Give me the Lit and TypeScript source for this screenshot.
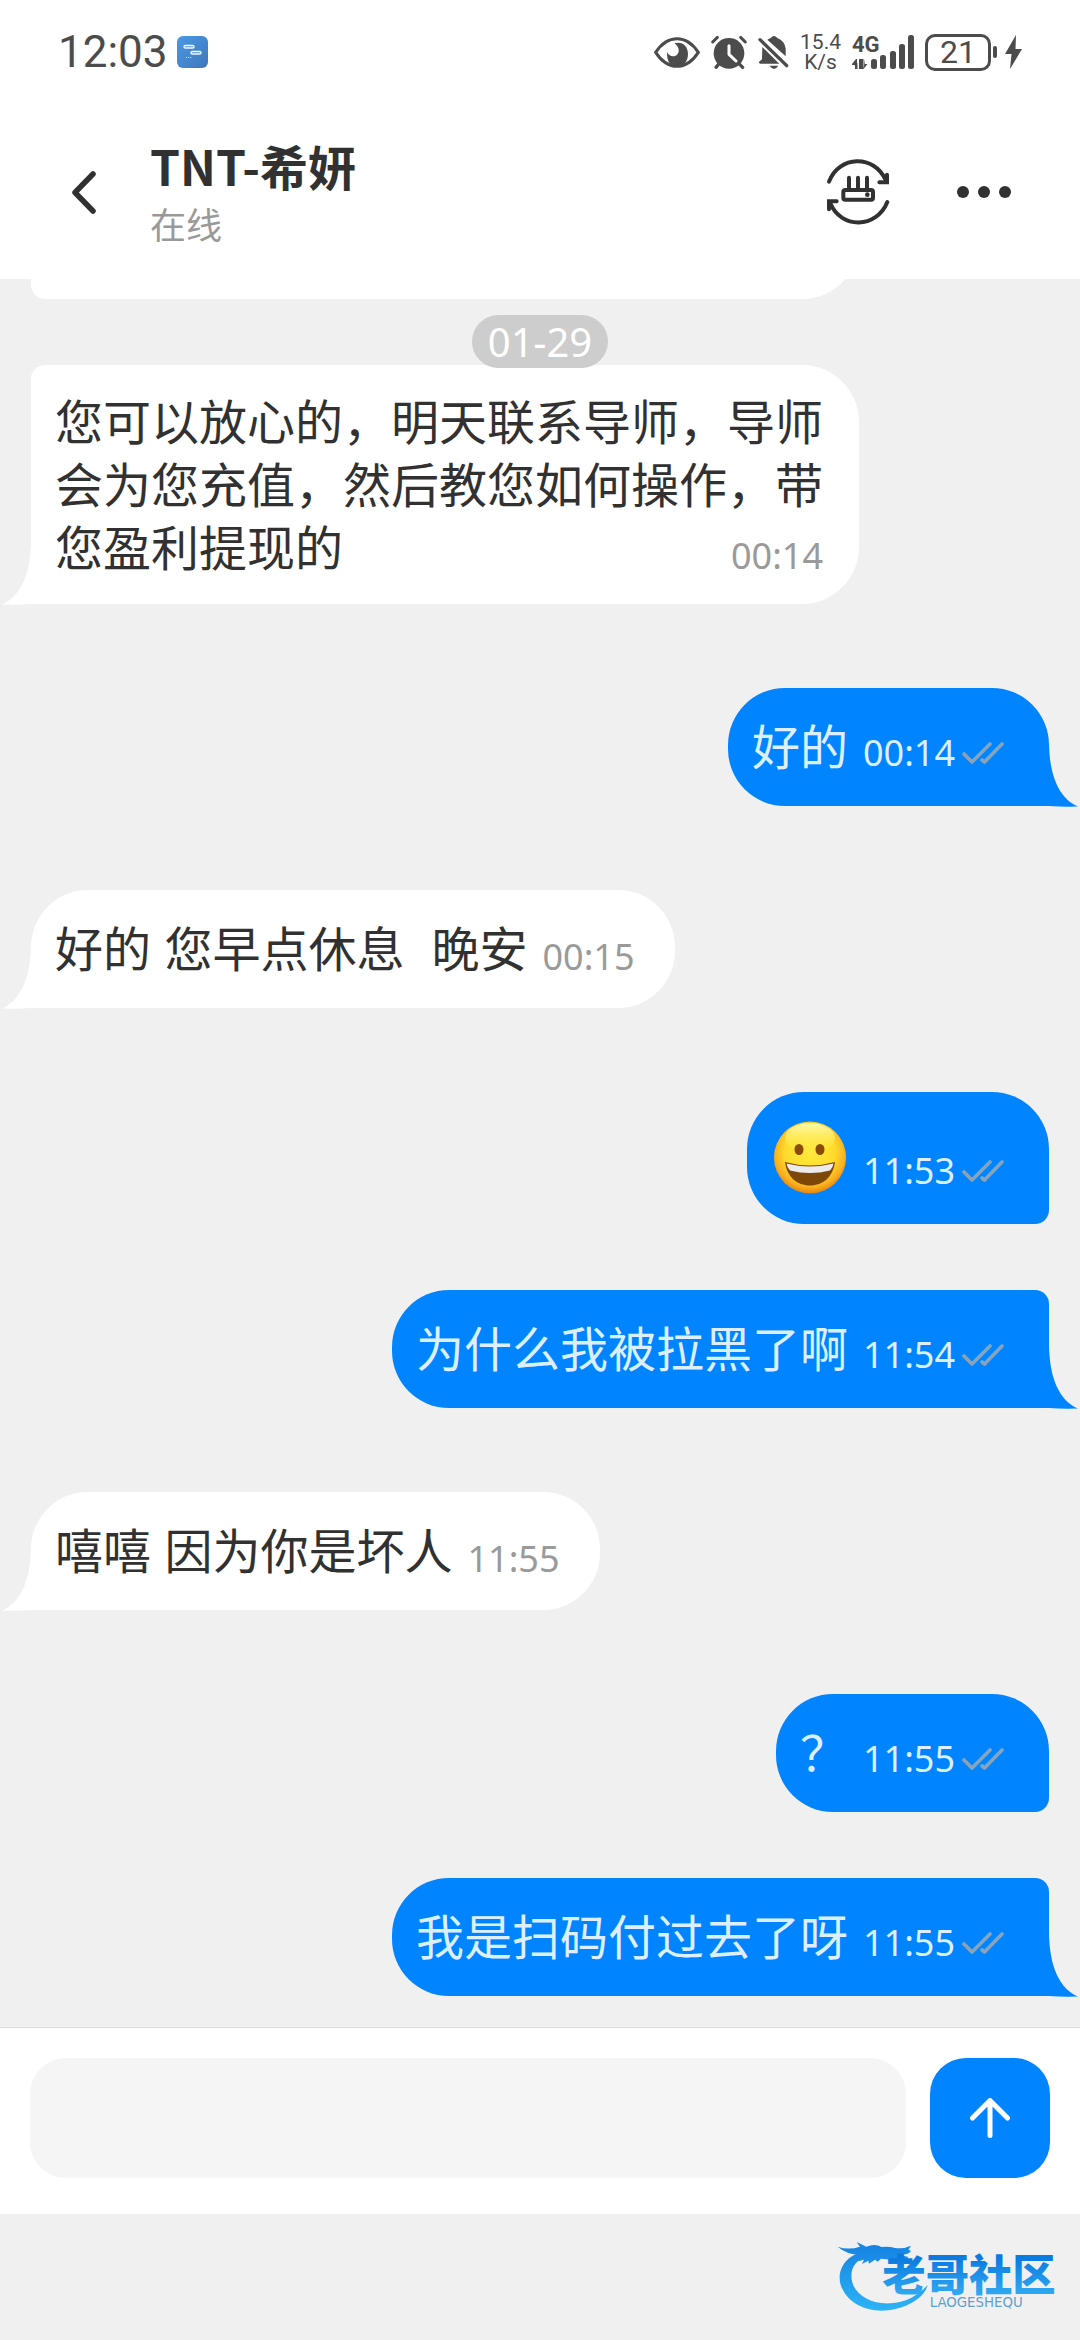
import { LitElement, html, svg, css, nothing } from "lit";
import { customElement, property } from "lit/decorators.js";
import { classMap } from "lit/directives/class-map.js";

interface Message {
  own: boolean;
  text?: string;
  emoji?: boolean;
  time: string;
  /** First message of a run by the same sender. */
  first: boolean;
  /** Last message of a run by the same sender; carries the tail. */
  last: boolean;
  long?: boolean;
}

const MESSAGES: Message[] = [
  { own: false, text: "您可以放心的，明天联系导师，导师会为您充值，然后教您如何操作，带您盈利提现的", time: "00:14", first: false, last: true, long: true },
  { own: true, text: "好的", time: "00:14", first: true, last: true },
  { own: false, text: "好的 您早点休息  晚安", time: "00:15", first: true, last: true },
  { own: true, emoji: true, time: "11:53", first: true, last: false },
  { own: true, text: "为什么我被拉黑了啊", time: "11:54", first: false, last: true },
  { own: false, text: "嘻嘻 因为你是坏人", time: "11:55", first: true, last: true },
  { own: true, text: "？", time: "11:55", first: true, last: false },
  { own: true, text: "我是扫码付过去了呀", time: "11:55", first: false, last: true },
];

const SIGNAL_BARS = [
  { x: 19, height: 10 },
  { x: 28, height: 14 },
  { x: 38, height: 18 },
  { x: 47, height: 25 },
  { x: 56, height: 34 },
];

@customElement("status-bar")
export class StatusBar extends LitElement {
  static styles = css`
    :host {
      display: flex;
      align-items: center;
      justify-content: space-between;
      height: 102px;
      padding: 2px 58px 0;
      box-sizing: border-box;
      color: #4c4c4c;
      font-family: Roboto, "Liberation Sans", sans-serif;
    }
    svg { display: block; flex: none; overflow: visible; }
    .side { display: flex; align-items: center; }
    .left { gap: 9px; }
    .right { gap: 11px; }
    .clock { font-size: 44px; line-height: 52px; }
    .speed { font-size: 21px; line-height: 20px; text-align: center; }
    .network { font-size: 22px; font-weight: 700; }
    .power { display: flex; align-items: center; gap: 7px; }
    .battery { display: flex; align-items: center; gap: 2px; }
    .level {
      width: 66px;
      height: 37px;
      box-sizing: border-box;
      border: 3px solid currentColor;
      border-radius: 10px;
      font-size: 32px;
      line-height: 31px;
      text-align: center;
    }
    .nub { width: 4px; height: 12px; border-radius: 2px; background: currentColor; }
  `;

  render() {
    return html`
      <div class="side left">
        <span class="clock">12:03</span>
        <svg width="31" height="32" viewBox="0 0 31 32" aria-hidden="true">
          <defs>
            <linearGradient id="app" x1="0" y1="0" x2="1" y2="1">
              <stop offset="0" stop-color="#4a98e6" /><stop offset="1" stop-color="#3e78ba" />
            </linearGradient>
          </defs>
          <rect width="31" height="32" rx="6" fill="url(#app)" />
          <rect x="7" y="9.5" width="10" height="2.5" rx="1.2" fill="#5d93d0" stroke="#e8f8ff" stroke-width="1.4" />
          <rect x="14" y="15.5" width="10" height="2.5" rx="1.2" fill="#5d93d0" stroke="#e8f8ff" stroke-width="1.4" />
          <path d="M9 21.5h1M11.2 21.5h1M13.4 21.5h1" stroke="#d8ecff" stroke-width="1.2" />
        </svg>
      </div>
      <div class="side right">
        <svg width="46" height="32" viewBox="30 45 138 96" aria-hidden="true">
          <path d="M35 94C50 71 72 53 99 53s49 18 64 41c-15 23-37 42-64 42S50 117 35 94z" fill="none" stroke="#4c4c4c" stroke-width="9" />
          <path d="M91 67C115 60 132 76 132 99c0 23-14 37-33 37S68 123 69 93c6 12 17 15 26 11 13-6 13-25-4-37z" fill="#4c4c4c" />
        </svg>
        <svg width="36" height="34" viewBox="204 42 108 102" aria-hidden="true">
          <circle cx="258" cy="97" r="46" fill="#4c4c4c" />
          <path d="M209 63l14-14M307 63l-14-14" stroke="#4c4c4c" stroke-width="9" stroke-linecap="round" />
          <path d="M229 127l-10 12M287 127l12 12" stroke="#4c4c4c" stroke-width="10" stroke-linecap="round" />
          <path d="M258 74v26l21 20" fill="none" stroke="#fff" stroke-width="9" stroke-linecap="round" stroke-linejoin="round" />
        </svg>
        <svg width="31" height="34" viewBox="347 42 93 102" aria-hidden="true">
          <path d="M353 56l80 78" stroke="#4c4c4c" stroke-width="10" stroke-linecap="round" />
          <path d="M360 78l51 50h-58q-6-3-1-7l7-6z" fill="#4c4c4c" />
          <path d="M375 56l10-5q10-12 20 0 22 8 25 32v23z" fill="#4c4c4c" />
          <path d="M382 134h26q-13 20-26 0z" fill="#4c4c4c" />
        </svg>
        <div class="speed">15.4<br />K/s</div>
        <svg width="62" height="35" viewBox="0 0 62 35" fill="#4c4c4c">
          <text class="network" x="0" y="17">4G</text>
          <path d="M5 34V24h-1L0 29v1h2.500v0M7 24h2.500v10H7zM11.500 34V24H9.500v10zM11.500 34l4-5h-2.500v-5z" />
          <path d="M3 28h2.500v6H3z" />
          ${SIGNAL_BARS.map((bar) => svg`<rect x=${bar.x} y=${34 - bar.height} width="6" height=${bar.height} rx="2.500" />`)}
        </svg>
        <div class="power">
          <div class="battery"><span class="level">21</span><span class="nub"></span></div>
          <svg width="18" height="36" viewBox="0 0 18 36" aria-hidden="true">
            <path d="M12 1L1 20h6.500L6 35 18 15h-6.500z" fill="#4c4c4c" />
          </svg>
        </div>
      </div>
    `;
  }
}

@customElement("chat-message")
export class ChatMessage extends LitElement {
  @property({ attribute: false }) message!: Message;

  static styles = css`
    :host { display: flex; padding: 0 31px; }
    svg { display: block; flex: none; }
    .bubble {
      position: relative;
      display: flex;
      gap: 15px;
      box-sizing: border-box;
      max-width: 828px;
      padding: 28px 40px 27px 24px;
      border-radius: 57px;
      background: #fff;
      color: #313131;
    }
    .own { margin-left: auto; padding-right: 45px; background: #0084ff; color: #dcefff; }
    .bubble.long { display: grid; padding: 26px 36px 24px 24px; }
    .long .text, .long .meta { grid-area: 1 / 1; }
    .text {
      margin: 0;
      font-family: Inter, "Noto Sans CJK SC", sans-serif;
      font-size: 48px;
      line-height: 63px;
      white-space: pre-wrap;
    }
    .meta {
      display: flex;
      align-items: center;
      gap: 7px;
      align-self: end;
      justify-self: end;
      margin-bottom: 2px;
      color: #9a9a9a;
      font-family: "Noto Sans", "Liberation Sans", sans-serif;
      font-size: 36px;
      line-height: 44px;
    }
    .own .meta { margin-bottom: 4px; color: #dcefff; }
    .joined-in { border-top-left-radius: 14px; }
    .joined-own { border-top-right-radius: 14px; }
    .open-own { border-bottom-right-radius: 14px; }
    .tail-in { border-bottom-left-radius: 0; }
    .tail-own { border-bottom-right-radius: 0; }
    .tail { position: absolute; bottom: -1px; }
    .tail-in .tail { right: 100%; color: #fff; transform: scaleX(-1); }
    .tail-own .tail { left: 100%; color: #0084ff; }
  `;

  private renderEmoji() {
    return html`<svg width="77" height="77" viewBox="0 0 77 77" role="img" aria-label="😀">
      <defs>
        <radialGradient id="face" cx="0.5" cy="0.42" r="0.58">
          <stop offset="0" stop-color="#ffe93a" />
          <stop offset="0.6" stop-color="#fedb2c" />
          <stop offset="0.85" stop-color="#f9b01d" />
          <stop offset="1" stop-color="#e88310" />
        </radialGradient>
        <linearGradient id="shine" x1="0" y1="0" x2="0" y2="1">
          <stop offset="0" stop-color="#fffbb0" /><stop offset="1" stop-color="#fff04a" stop-opacity="0" />
        </linearGradient>
      </defs>
      <circle cx="39" cy="37.500" r="36" fill="url(#face)" />
      <ellipse cx="39" cy="18" rx="25" ry="15" fill="url(#shine)" />
      <ellipse cx="28" cy="29.500" rx="4.500" ry="5.500" fill="#8a4b06" />
      <ellipse cx="49" cy="29.500" rx="4.500" ry="5.500" fill="#8a4b06" />
      <path d="M14 42q25 7 50 0C62 57 52 65.500 39 65.500S16 57 14 42z" fill="#7d4707" />
      <path d="M15.500 43.500q23.500 6 47 0-.500 4-3.500 7-20 5-40 0-3-3-3.500-7z" fill="#eceaec" />
    </svg>`;
  }

  render() {
    const m = this.message;
    const classes = {
      bubble: true,
      own: m.own,
      long: !!m.long,
      "joined-in": !m.own && !m.first,
      "joined-own": m.own && !m.first,
      "open-own": m.own && !m.last,
      "tail-in": !m.own && m.last,
      "tail-own": m.own && m.last,
    };
    return html`<div class=${classMap(classes)}>
      ${m.emoji ? this.renderEmoji() : html`<p class="text">${m.text}</p>`}
      <span class="meta">
        <time>${m.time}</time>
        ${m.own
          ? html`<svg width="42" height="24" viewBox="0 0 42 24" role="img" aria-label="已读">
              <path d="M2 13l8 8L28 3M20 19l2.500 2L40 3" fill="none" stroke="#8ba3b6" stroke-width="3.600" stroke-linecap="round" stroke-linejoin="round" />
            </svg>`
          : nothing}
      </span>
      ${m.last
        ? html`<svg class="tail" width="29" height="66" viewBox="0 0 29 66" aria-hidden="true">
            <path d="M-1 0H0C0 36 11 58 29 65.500Q14 66 -1 65z" fill="currentColor" />
          </svg>`
        : nothing}
    </div>`;
  }
}

@customElement("app-root")
export class AppRoot extends LitElement {
  static styles = css`
    :host {
      display: flex;
      flex-direction: column;
      height: 100vh;
      background: #f0f0f0;
      color: #313131;
      font-family: "Noto Sans CJK SC", "Noto Sans", sans-serif;
    }
    svg { display: block; flex: none; }
    button { padding: 0; border: 0; background: none; color: inherit; cursor: pointer; }
    .top { flex: none; background: #fff; }
    .nav {
      display: flex;
      align-items: center;
      padding: 31px 69px 28px 72px;
    }
    .contact { flex: 1; margin-left: 54px; padding-bottom: 6px; }
    .name { margin: 0; font-size: 48px; line-height: 64px; font-weight: 700; }
    .presence { margin: 4px 0 0; color: #999; font-size: 36px; line-height: 44px; }
    .actions { display: flex; align-items: center; gap: 67px; }
    .chat {
      flex: 1;
      min-height: 0;
      overflow: hidden;
      display: flex;
      flex-direction: column;
      justify-content: flex-end;
      padding-bottom: 31px;
    }
    .chat > * { flex: none; }
    .earlier {
      height: 118px;
      width: 828px;
      margin-left: 31px;
      border-radius: 57px 57px 57px 14px;
      background: #fff;
    }
    .date {
      z-index: 1;
      align-self: center;
      margin: 16px 0 -3px;
      padding: 0 16px;
      border-radius: 27px;
      background: #cdcdcd;
      color: #fff;
      font-family: "Noto Sans", sans-serif;
      font-size: 40px;
      line-height: 53px;
    }
    .message { margin-top: 84px; }
    .message.joined { margin-top: 66px; }
    .message.leading { margin-top: 0; }
    .composer {
      flex: none;
      display: flex;
      gap: 24px;
      padding: 30px 30px 36px;
      border-top: 1px solid #d8d8d8;
      background: #fff;
    }
    .input {
      flex: 1;
      min-width: 0;
      height: 120px;
      box-sizing: border-box;
      padding: 0 32px;
      border: 0;
      border-radius: 36px;
      outline: 0;
      background: #f5f5f5;
      color: inherit;
      font: inherit;
      font-size: 48px;
    }
    .send {
      display: grid;
      place-items: center;
      width: 120px;
      height: 120px;
      border-radius: 36px;
      background: #0084ff;
    }
    .brand { flex: none; display: flex; justify-content: flex-end; padding: 11px 5px 20px; }
  `;

  render() {
    return html`
      <header class="top">
        <status-bar></status-bar>
        <nav class="nav">
          <button aria-label="返回">
            <svg width="24" height="43" viewBox="0 0 24 43"><path d="M21 3L3 21.500 21 40" fill="none" stroke="#313131" stroke-width="5.500" stroke-linecap="round" stroke-linejoin="round" /></svg>
          </button>
          <div class="contact">
            <h1 class="name">TNT-希妍</h1>
            <p class="presence">在线</p>
          </div>
          <div class="actions">
            <button aria-label="切换线路">
              <svg width="64" height="68" viewBox="618 474 192 204" fill="none" stroke="#313131" stroke-width="12" stroke-linecap="round">
                <path d="M627 545C657 465 763 463 797 540" />
                <path d="M802 606C770 686 663 688 631 610" />
                <path d="M801 524v23h-23M627 628v-24h23" />
                <path d="M687 533v32M714 533v32M741 533v32" />
                <rect x="670" y="570" width="89" height="29" rx="6" />
                <circle cx="742" cy="584" r="7" fill="#313131" stroke="none" />
              </svg>
            </button>
            <button aria-label="更多">
              <svg width="54" height="12" viewBox="0 0 54 12" fill="#313131"><circle cx="6" cy="6" r="6" /><circle cx="27" cy="6" r="6" /><circle cx="48" cy="6" r="6" /></svg>
            </button>
          </div>
        </nav>
      </header>
      <main class="chat">
        <div class="earlier"></div>
        <time class="date">01-29</time>
        ${MESSAGES.map(
          (m, i) => html`<chat-message
            class=${classMap({ message: true, leading: i === 0, joined: !m.first && i > 0 })}
            .message=${m}
          ></chat-message>`
        )}
      </main>
      <form class="composer" @submit=${(e: Event) => e.preventDefault()}>
        <input class="input" type="text" aria-label="消息" />
        <button class="send" aria-label="发送">
          <svg width="40" height="40" viewBox="0 0 40 40" fill="none" stroke="#fff" stroke-width="5" stroke-linecap="round" stroke-linejoin="round"><path d="M20 37.500V3M2.500 20L20 2.500 37.500 20" /></svg>
        </button>
      </form>
      <footer class="brand">
        <svg width="250" height="95" viewBox="0 0 750 285">
          <defs>
            <linearGradient id="ring" gradientUnits="userSpaceOnUse" x1="0" y1="60" x2="0" y2="260">
              <stop offset="0" stop-color="#1583e2" /><stop offset="1" stop-color="#2db4f6" />
            </linearGradient>
            <linearGradient id="word" gradientUnits="userSpaceOnUse" x1="0" y1="100" x2="0" y2="210">
              <stop offset="0" stop-color="#0b7be0" /><stop offset="1" stop-color="#30aaf2" />
            </linearGradient>
          </defs>
          <g fill="url(#ring)">
            <path d="M112 82C58 92 30 145 51 190c24 54 92 78 160 62 48-11 88-37 97-72-30 33-66 52-112 55-62 3-110-28-116-72-5-35 14-60 54-75z" />
            <path d="M38 65q32 11 67 0l-10-14q18 9 29 14 26-10 46 1 24-2 40 3 24 4 48-7l-8 13 8 2q-5 11-32 13l24 6-5 7q-22 6-44 1l-33-3-10 9-8-6-18 12-2-9-19 10 6-13-18 5 10-20q-40 2-71-24z" />
          </g>
          <text x="172" y="198" font-family="Noto Sans CJK SC, sans-serif" font-weight="900" font-size="130" fill="url(#word)">老哥社区</text>
          <text x="314" y="246" font-family="DejaVu Sans, sans-serif" font-size="40" fill="#5d9fd0">LAOGESHEQU</text>
        </svg>
      </footer>
    `;
  }
}
